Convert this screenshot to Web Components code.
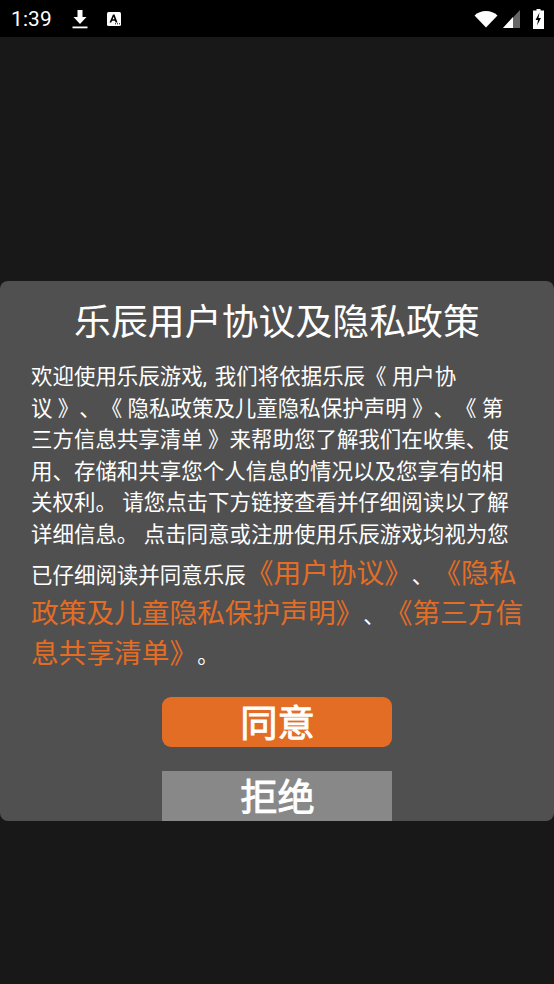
<!DOCTYPE html>
<html lang="zh-CN"><head><meta charset="utf-8">
<style>
html,body{margin:0;padding:0;width:554px;height:984px;overflow:hidden;background:#181818;}
body{font-family:Roboto,"Noto Sans CJK SC",sans-serif;display:flex;flex-direction:column;text-spacing-trim:space-all;font-kerning:none}
</style></head><body>
<status-bar></status-bar>
<dialog-page>
  <policy-panel>
    <action-button slot="btn" primary>同意</action-button>
    <action-button slot="btn">拒绝</action-button>
  </policy-panel>
</dialog-page>
<script>
class StatusBar extends HTMLElement{constructor(){super();this.attachShadow({mode:'open'}).innerHTML=`
<style>
:host{display:flex;align-items:center;height:37px;flex:none;background:#000;color:#fff;font:400 20.8px Roboto,sans-serif;padding:0 10px 0 11px;box-sizing:border-box}
.time{width:60px;letter-spacing:.2px}
svg{display:block;flex:none}
.a{margin-left:17px}.sp{flex:1}
.sig{margin-left:5px}.bat{margin-left:12px}
</style>
<span class="time">1:39</span>
<svg class="dl" width="18" height="22" viewBox="0 0 18 22"><path d="M6.500 2h5v7h4l-6.500 7-6.500-7h4z" fill="#fff"/><rect x="1.500" y="18.500" width="15" height="1.800" fill="#fff"/></svg>
<svg class="a" width="16" height="16" viewBox="0 0 16 16"><rect x="1" y="1" width="14" height="14" rx="1.500" fill="#fff"/><path d="M3.500 11.500 7 3.500h1.500l3 8h-1.900l-.6-1.700H6l-.7 1.700zM6.600 8.300h1.900L7.600 5.800z" fill="#000"/><rect x="9" y="12.300" width="1" height="1" fill="#000"/><rect x="11" y="12.300" width="1" height="1" fill="#000"/><rect x="13" y="12.300" width="1" height="1" fill="#000"/></svg>
<span class="sp"></span>
<svg width="24" height="18" viewBox="0 0 24 18"><path d="M0.500 5.500C3.500 2.500 7.500 1 12 1s8.500 1.500 11.500 4.500L12 17.500z" fill="#fff"/></svg>
<svg class="sig" width="18" height="18" viewBox="0 0 18 18"><path d="M17 0v18H0z" fill="#666"/><path d="M10 7v11H0z" fill="#fff"/></svg>
<svg class="bat" width="11" height="20" viewBox="0 0 11 20"><path d="M3.500 0h4v1.500H11V20H0V1.500h3.500z" fill="#fff"/><path d="M6.500 3.500 2.500 11h2.500l-1 5.500 4-7.500H5.500z" fill="#000"/></svg>
`}}
class DialogPage extends HTMLElement{constructor(){super();this.attachShadow({mode:'open'}).innerHTML=`
<style>:host{display:block;flex:1;padding-top:244px}</style><slot></slot>`}}
class ActionButton extends HTMLElement{constructor(){super();this.attachShadow({mode:'open'}).innerHTML=`
<style>
:host{display:flex;justify-content:center;align-items:center;width:230px;height:50px;flex:none;box-sizing:border-box;color:#fff;font-weight:400;-webkit-text-stroke:.9px #fff;font-size:37.3px;line-height:50px;background:#888;padding:4px 0 0 1px}
:host([primary]){background:#e46d25;border-radius:9px}
</style><slot></slot>`}}
class PolicyPanel extends HTMLElement{constructor(){super();this.attachShadow({mode:'open'}).innerHTML=`
<style>
:host{display:flex;flex-direction:column;align-items:center;height:540px;box-sizing:border-box;overflow:hidden;border-radius:8px;background:#505050;color:#fff;padding-top:19px}
h1{margin:0;font-weight:400;font-size:36.9px;line-height:46px;text-align:center;white-space:nowrap}
.body{align-self:stretch;margin:15px 0 0;padding:0 20px 0 31px;font-size:21.47px;line-height:31.6px;color:#fff;white-space:nowrap}
.o{color:#e46d25;font-size:27.7px;line-height:1}
.l{display:block}
.big{line-height:40px}
.first{margin-top:5px}
.c{margin-right:2.5px}
.btns{display:flex;flex-direction:column;align-items:center;gap:24px;margin-top:21px}
</style>
<h1>乐辰用户协议及隐私政策</h1>
<div class="body">
<span class="l">欢迎使用乐辰游戏<span class="c">,</span> 我们将依据乐辰《 用户协</span>
<span class="l">议 》、《 隐私政策及儿童隐私保护声明 》、《 第</span>
<span class="l">三方信息共享清单 》来帮助您了解我们在收集、使</span>
<span class="l">用、存储和共享您个人信息的情况以及您享有的相</span>
<span class="l">关权利。 请您点击下方链接查看并仔细阅读以了解</span>
<span class="l">详细信息。 点击同意或注册使用乐辰游戏均视为您</span>
<span class="l big first">已仔细阅读并同意乐辰<span class="o">《用户协议》</span>、<span class="o">《隐私</span></span>
<span class="l big"><span class="o">政策及儿童隐私保护声明》</span>、<span class="o">《第三方信</span></span>
<span class="l big"><span class="o">息共享清单》</span>。</span>
</div>
<div class="btns"><slot name="btn"></slot></div>
`}}
customElements.define('status-bar',StatusBar);
customElements.define('dialog-page',DialogPage);
customElements.define('action-button',ActionButton);
customElements.define('policy-panel',PolicyPanel);
</script>
</body></html>
